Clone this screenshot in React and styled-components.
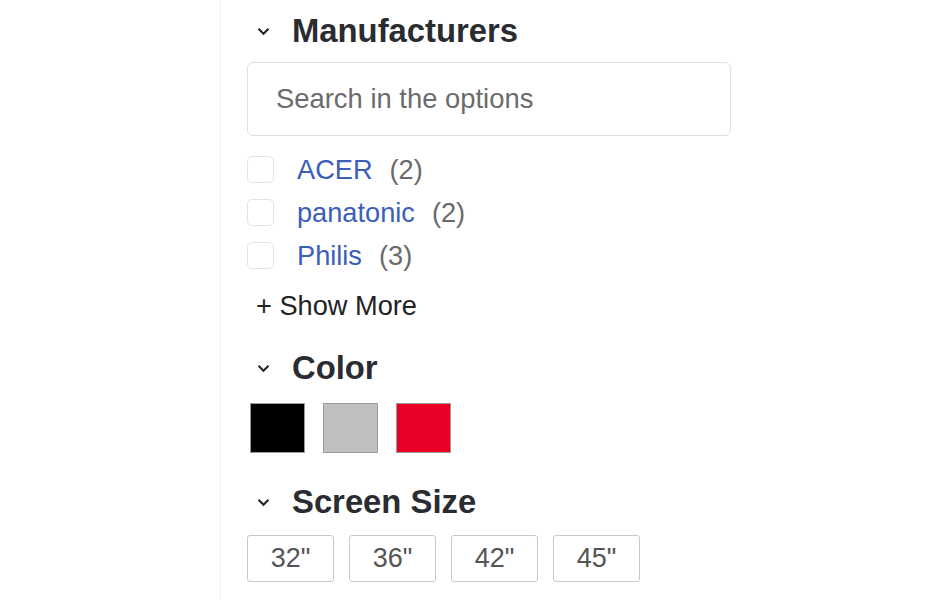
import React from 'react';
import styled, { createGlobalStyle } from 'styled-components';

const GlobalStyle = createGlobalStyle`
  html, body {
    margin: 0;
    padding: 0;
    background: #ffffff;
    font-family: "Liberation Sans", Arial, sans-serif;
  }
`;

const manufacturers = [
  { name: 'ACER', count: 2 },
  { name: 'panatonic', count: 2 },
  { name: 'Philis', count: 3 },
];

const colors = ['#000000', '#c0c0c0', '#e80026'];

const sizes = ['32"', '36"', '42"', '45"'];

const Chevron = () => (
  <svg width="13" height="9" viewBox="0 0 13 9" fill="none">
    <path d="M1.5 1.8 L6.5 6.8 L11.5 1.8" stroke="#222" strokeWidth="2" />
  </svg>
);

const FilterSection = ({ title, children, top }) => (
  <SectionStyle $top={top}>
    <SectionHeaderStyle>
      <ChevronBoxStyle>
        <Chevron />
      </ChevronBoxStyle>
      <SectionTitleStyle>{title}</SectionTitleStyle>
    </SectionHeaderStyle>
    {children}
  </SectionStyle>
);

const App = () => {
  return (
    <>
      <GlobalStyle />
      <PageStyle>
        <SidebarStyle>
          <FilterSection title="Manufacturers" top={12}>
            <SearchInputStyle placeholder="Search in the options" />
            <OptionListStyle>
              {manufacturers.map((item) => (
                <OptionRowStyle key={item.name}>
                  <CheckboxStyle />
                  <OptionLabelStyle>{item.name}</OptionLabelStyle>
                  <OptionCountStyle>({item.count})</OptionCountStyle>
                </OptionRowStyle>
              ))}
            </OptionListStyle>
            <ShowMoreStyle>+ Show More</ShowMoreStyle>
          </FilterSection>

          <FilterSection title="Color" top={28}>
            <SwatchRowStyle>
              {colors.map((c) => (
                <SwatchStyle key={c} $color={c} />
              ))}
            </SwatchRowStyle>
          </FilterSection>

          <FilterSection title="Screen Size" top={30}>
            <SizeRowStyle>
              {sizes.map((s) => (
                <SizeButtonStyle key={s}>{s}</SizeButtonStyle>
              ))}
            </SizeRowStyle>
          </FilterSection>
        </SidebarStyle>
      </PageStyle>
    </>
  );
};

const PageStyle = styled.div`
  width: 940px;
  height: 600px;
  overflow: hidden;
  padding-left: 220px;
  box-sizing: border-box;
`;

const SidebarStyle = styled.div`
  height: 600px;
  border-left: 1px solid #f1f1f1;
  padding-left: 26px;
  width: 485px;
`;

const SectionStyle = styled.div`
  padding-top: ${(p) => p.$top}px;
`;

const SectionHeaderStyle = styled.div`
  display: flex;
  align-items: center;
  height: 38px;
`;

const ChevronBoxStyle = styled.div`
  width: 45px;
  padding-left: 10px;
  box-sizing: border-box;
  display: flex;
  align-items: center;
  margin-top: 1px;
`;

const SectionTitleStyle = styled.h3`
  margin: 0;
  font-size: 32.8px;
  font-weight: 700;
  color: #2a2c31;
  line-height: 38px;
`;

const SearchInputStyle = styled.input`
  display: block;
  margin-top: 12px;
  width: 484px;
  height: 74px;
  box-sizing: border-box;
  border: 1px solid #dcdfe4;
  border-radius: 6px;
  padding: 0 28px;
  font-family: "Liberation Sans", Arial, sans-serif;
  font-size: 27.4px;
  color: #333;
  outline: none;
  &::placeholder {
    color: #6b6b6b;
  }
`;

const OptionListStyle = styled.div`
  margin-top: 12px;
  display: flex;
  flex-direction: column;
`;

const OptionRowStyle = styled.label`
  display: flex;
  align-items: center;
  height: 43px;
  cursor: pointer;
`;

const CheckboxStyle = styled.span`
  width: 27px;
  height: 27px;
  box-sizing: border-box;
  border: 1px solid #e2e4e8;
  border-radius: 5px;
  margin-right: 23px;
  background: #fff;
`;

const OptionLabelStyle = styled.span`
  font-size: 27.2px;
  color: #3b5eb9;
`;

const OptionCountStyle = styled.span`
  font-size: 27.2px;
  color: #6a6a6a;
  margin-left: 17px;
`;

const ShowMoreStyle = styled.div`
  margin-top: 13px;
  padding-left: 9px;
  font-size: 27.2px;
  line-height: 31px;
  color: #222;
  cursor: pointer;
`;

const SwatchRowStyle = styled.div`
  display: flex;
  gap: 18px;
  margin-top: 16px;
  padding-left: 3px;
`;

const SwatchStyle = styled.div`
  width: 55px;
  height: 50px;
  box-sizing: border-box;
  border: 1px solid #9a9a9a;
  background: ${(p) => p.$color};
`;

const SizeRowStyle = styled.div`
  display: flex;
  gap: 15px;
  margin-top: 14px;
`;

const SizeButtonStyle = styled.button`
  width: 87px;
  height: 47px;
  box-sizing: border-box;
  border: 1px solid #c9c9c9;
  border-radius: 3px;
  background: #fff;
  font-family: "Liberation Sans", Arial, sans-serif;
  font-size: 27px;
  color: #555;
  padding: 0;
  cursor: pointer;
`;

export default App;
